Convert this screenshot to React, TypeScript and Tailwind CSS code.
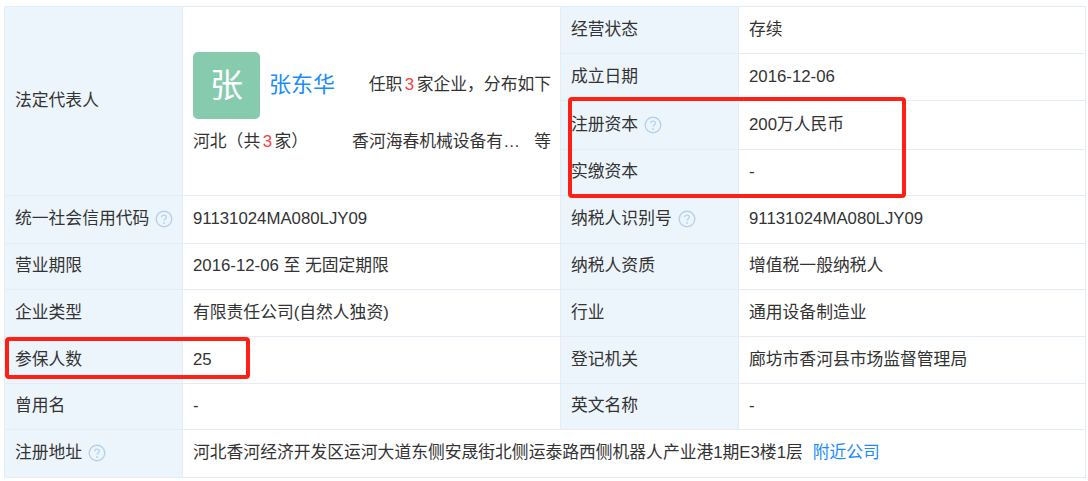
import React from 'react';

const HelpIcon: React.FC = () => (
  <svg className="ml-[6px] inline-block shrink-0" width="18" height="18" viewBox="0 0 18 18" fill="none">
    <circle cx="9" cy="9" r="7.8" stroke="#b5d2ea" strokeWidth="1.4" />
    <path d="M6.7 7.2c0-1.3 1-2.1 2.3-2.1s2.3.8 2.3 2c0 1.9-2.3 1.8-2.3 3.7" stroke="#b5d2ea" strokeWidth="1.3" />
    <circle cx="9" cy="13" r=".9" fill="#b5d2ea" />
  </svg>
);

const Label: React.FC<{ text: string; help?: boolean }> = ({ text, help }) => (
  <td className="border border-[#e4edf5] bg-[#edf5fc] pb-[1px] pl-[10px]">
    <div className="flex items-center">
      {text}
      {help && <HelpIcon />}
    </div>
  </td>
);

const Value: React.FC<{ children: React.ReactNode; colSpan?: number }> = ({ children, colSpan }) => (
  <td colSpan={colSpan} className="border border-[#e4edf5] pb-[1px] pl-[10px]">
    {children}
  </td>
);

const Red: React.FC<{ children: React.ReactNode }> = ({ children }) => (
  <span className="mx-[2.5px] text-[#f5413f]">{children}</span>
);

export default function App() {
  return (
    <div
      lang="zh-CN"
      className="relative h-[481px] w-[1088px] overflow-hidden bg-white pl-[4px] pt-[6px] font-['Liberation_Sans','Noto_Sans_CJK_SC',sans-serif] text-[16.8px] text-[#333]"
    >
      <table className="w-[1081px] table-fixed border-collapse">
        <colgroup>
          <col className="w-[178px]" />
          <col className="w-[378px]" />
          <col className="w-[178px]" />
          <col className="w-[347px]" />
        </colgroup>
        <tbody>
          <tr className="h-[47px]">
            <td rowSpan={4} className="border border-[#e4edf5] bg-[#edf5fc] pb-[1px] pl-[10px]">法定代表人</td>
            <td rowSpan={4} className="border border-[#e4edf5] pl-[10px] pr-[9px] pt-[5px]">
              <div className="flex items-center">
                <div className="flex h-[67px] w-[67px] shrink-0 items-center justify-center rounded-[5px] bg-[#87cbae] text-[33px] text-white">
                  张
                </div>
                <a className="mb-[3px] ml-[9px] text-[22px] text-[#1a8cff]">张东华</a>
                <span className="mb-[3px] ml-auto">
                  任职<Red>3</Red>家企业{'\uFF0C'}分布如下
                </span>
              </div>
              <div className="mt-[10px] flex items-center">
                <span>
                  河北{'\uFF08'}共<Red>3</Red>家{'\uFF09'}
                </span>
                <span className="ml-[44px]">香河海春机械设备有…</span>
                <span className="ml-auto">等</span>
              </div>
            </td>
            <Label text="经营状态" />
            <Value>存续</Value>
          </tr>
          <tr className="h-[47px]">
            <Label text="成立日期" />
            <Value>2016-12-06</Value>
          </tr>
          <tr className="h-[49px]">
            <Label text="注册资本" help />
            <Value>200万人民币</Value>
          </tr>
          <tr className="h-[46px]">
            <Label text="实缴资本" />
            <Value>-</Value>
          </tr>
          <tr className="h-[48px]">
            <Label text="统一社会信用代码" help />
            <Value>91131024MA080LJY09</Value>
            <Label text="纳税人识别号" help />
            <Value>91131024MA080LJY09</Value>
          </tr>
          <tr className="h-[46px]">
            <Label text="营业期限" />
            <Value>2016-12-06 至 无固定期限</Value>
            <Label text="纳税人资质" />
            <Value>增值税一般纳税人</Value>
          </tr>
          <tr className="h-[47px]">
            <Label text="企业类型" />
            <Value>有限责任公司(自然人独资)</Value>
            <Label text="行业" />
            <Value>通用设备制造业</Value>
          </tr>
          <tr className="h-[47px]">
            <Label text="参保人数" />
            <Value>25</Value>
            <Label text="登记机关" />
            <Value>廊坊市香河县市场监督管理局</Value>
          </tr>
          <tr className="h-[46px]">
            <Label text="曾用名" />
            <Value>-</Value>
            <Label text="英文名称" />
            <Value>-</Value>
          </tr>
          <tr className="h-[48px]">
            <Label text="注册地址" help />
            <Value colSpan={3}>
              河北香河经济开发区运河大道东侧安晟街北侧运泰路西侧机器人产业港1期E3楼1层
              <a className="ml-[10px] text-[#1a8cff]">附近公司</a>
            </Value>
          </tr>
        </tbody>
      </table>

      {/* red annotation boxes drawn over the table */}
      <div className="pointer-events-none absolute left-[568px] top-[97px] h-[101px] w-[338px] rounded-[4px] border-[4px] border-[#ff2015]" />
      <div className="pointer-events-none absolute left-[5px] top-[337px] h-[42px] w-[245px] rounded-[4px] border-[4px] border-[#ff2015]" />
    </div>
  );
}
